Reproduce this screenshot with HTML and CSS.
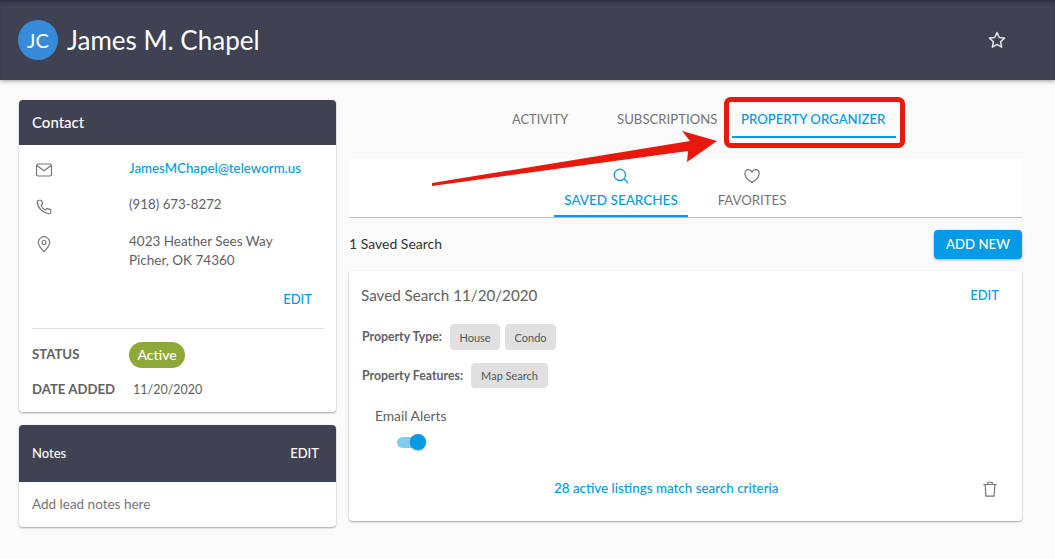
FILE: index.html
```html
<!DOCTYPE html>
<html lang="en">
<head>
<meta charset="utf-8">
<title>James M. Chapel</title>
<link rel="stylesheet" href="styles.css">
</head>
<body>
<header class="topbar">
  <div class="avatar">JC</div>
  <h1 class="name">James M. Chapel</h1>
  <svg class="star" viewBox="0 0 24 24" width="20" height="20"><path d="M12 3l2.7 6 6.3.7-4.7 4.4 1.3 6.5L12 17.3l-5.6 3.3 1.3-6.5L3 9.700l6.300-.7z" fill="none" stroke="#e4e5e8" stroke-width="1.800" stroke-linejoin="round"/></svg>
</header>
<main class="page">
  <aside class="side">
    <section class="card contact">
      <div class="card-head contact-head"><span>Contact</span></div>
      <div class="contact-body">
        <div class="row row-email">
          <svg class="ico" viewBox="0 0 24 24" width="18" height="18"><rect x="2" y="4" width="20" height="16" rx="2" fill="none" stroke="#757575" stroke-width="1.500"/><path d="M2.500 6l9.500 7 9.500-7" fill="none" stroke="#757575" stroke-width="1.500"/></svg>
          <a class="email">JamesMChapel@teleworm.us</a>
        </div>
        <div class="row row-phone">
          <svg class="ico" viewBox="0 0 24 24" width="18" height="18"><path d="M5 3h3.500l1.700 5-2.200 1.800c1 2.500 3.600 5.200 6.200 6.200l1.800-2.200 5 1.700V19c0 1.200-1 2.200-2.200 2C10.500 20.300 3.700 13.500 3 5.200 2.900 4 3.800 3 5 3z" fill="none" stroke="#757575" stroke-width="1.500" stroke-linejoin="round"/></svg>
          <span>(918) 673-8272</span>
        </div>
        <div class="row row-addr">
          <svg class="ico" viewBox="0 0 24 24" width="18" height="18"><path d="M12 22s-7.500-6.800-7.500-12.300a7.500 7.500 0 0 1 15 0C19.500 15.200 12 22 12 22z" fill="none" stroke="#757575" stroke-width="1.500"/><circle cx="12" cy="10" r="2.600" fill="none" stroke="#757575" stroke-width="1.500"/></svg>
          <span>4023 Heather Sees Way<br>Picher, OK 74360</span>
        </div>
        <div class="edit-line"><a class="link-edit">EDIT</a></div>
        <hr class="rule">
        <div class="meta meta-status"><b>STATUS</b><span class="badge">Active</span></div>
        <div class="meta meta-date"><b>DATE ADDED</b><span>11/20/2020</span></div>
      </div>
    </section>
    <section class="card notes">
      <div class="card-head notes-head"><span>Notes</span><span class="notes-edit">EDIT</span></div>
      <div class="notes-body">Add lead notes here</div>
    </section>
  </aside>
  <div class="content">
    <nav class="tabs">
      <a class="tab tab-activity">ACTIVITY</a>
      <a class="tab tab-subs">SUBSCRIPTIONS</a>
      <a class="tab tab-on">PROPERTY ORGANIZER</a>
    </nav>
    <div class="subtabs">
      <a class="subtab subtab-on">
        <svg viewBox="0 0 24 24" width="18" height="18"><circle cx="10.500" cy="10.500" r="7.500" fill="none" stroke="#039be5" stroke-width="1.700"/><path d="M16 16l5.500 5.500" stroke="#039be5" stroke-width="1.700" fill="none"/></svg>
        <span>SAVED SEARCHES</span>
      </a>
      <a class="subtab subtab-fav">
        <svg viewBox="0 0 24 24" width="20" height="18"><path d="M12 20.500S2.500 14.500 2.500 8.500C2.500 5.500 4.800 3.500 7.300 3.500c2 0 3.700 1 4.700 3 1-2 2.700-3 4.700-3 2.500 0 4.800 2 4.800 5 0 6-9.500 12-9.500 12z" fill="none" stroke="#757575" stroke-width="1.600"/></svg>
        <span>FAVORITES</span>
      </a>
    </div>
    <div class="toolbar">
      <span class="count">1 Saved Search</span>
      <button class="add">ADD NEW</button>
    </div>
    <section class="card search">
      <div class="search-head">
        <h2>Saved Search 11/20/2020</h2>
        <a class="link-edit">EDIT</a>
      </div>
      <div class="chips chips-type"><b>Property Type:</b><span class="chip">House</span><span class="chip">Condo</span></div>
      <div class="chips chips-feat"><b>Property Features:</b><span class="chip">Map Search</span></div>
      <div class="alerts">
        <span>Email Alerts</span>
        <span class="switch"><span class="knob"></span></span>
      </div>
      <div class="search-foot">
        <a class="match">28 active listings match search criteria</a>
        <svg class="trash" viewBox="0 0 24 24" width="18" height="18"><path d="M3 6h18M9 6V3h6v3M5.500 6l1 15.500h11L18.500 6" fill="none" stroke="#757575" stroke-width="1.600" stroke-linejoin="round"/></svg>
      </div>
    </section>
  </div>
</main>
<svg class="annot" viewBox="0 0 1055 559" width="1055" height="559">
  <rect x="726.500" y="99.500" width="176" height="46" rx="4" fill="none" stroke="#e8190c" stroke-width="5"/>
  <path d="M432 183L432 186L688 151L687 162L717 141L682 131L690 141z" fill="#e8190c"/>
</svg>
</body>
</html>
```
FILE: styles.css
```css
* { box-sizing: border-box; }
html, body { margin: 0; padding: 0; }
body {
  width: 1055px;
  height: 559px;
  overflow: hidden;
  position: relative;
  background: #fafafa;
  font-family: "Lato", "Open Sans", sans-serif;
  font-size: 13.300px;
  color: #5f5f5f;
}
a { color: inherit; text-decoration: none; }
.topbar {
  height: 80px;
  background: #3e4253;
  display: flex;
  align-items: center;
  padding: 0 48px 0 18px;
  box-shadow: inset 0 4px 4px -3px rgba(0,0,0,.45), 0 1px 4px rgba(0,0,0,.4);
  position: relative;
}
.avatar {
  width: 40px;
  height: 40px;
  border-radius: 50%;
  background: #378bd8;
  color: #fff;
  font-size: 20px;
  font-weight: 400;
  display: flex;
  align-items: center;
  justify-content: center;
}
.name {
  margin: 0 0 0 9px;
  font-size: 26px;
  font-weight: 400;
  color: #fff;
  flex: 1;
}
.page {
  display: flex;
  gap: 13px;
  padding: 20px 33px 0 19px;
}
.side { width: 317px; display: flex; flex-direction: column; gap: 13px; }
.content { width: 673px; }
.card {
  background: #fff;
  border-radius: 4px;
  box-shadow: 0 1px 2px rgba(0,0,0,.35);
}
.card-head {
  background: #3e4253;
  color: #fff;
  border-radius: 4px 4px 0 0;
  display: flex;
  align-items: center;
  justify-content: space-between;
  padding: 0 17px 0 13px;
}
.contact { height: 312px; }
.contact-head { height: 45px; font-size: 15px; font-weight: 500; padding-bottom: 2px; }
.contact-body { padding: 13px 12px 0 13px; }
.row { display: flex; align-items: flex-start; line-height: 21px; }
.ico { width: 18px; flex: none; margin: 3px 76px 0 3px; }
.row-email { height: 36px; }
.row-phone { height: 37px; }
.row-phone .ico { margin-top: 4px; }
.row-addr { height: 57px; line-height: 19px; margin-top: 1px; font-size: 13.500px; }
.email { color: #039be5; font-weight: 500; }
.edit-line { text-align: right; padding-right: 12px; line-height: 20px; }
.link-edit { color: #039be5; font-size: 13px; font-weight: 500; }
.rule { border: 0; border-top: 1px solid #e0e0e0; margin: 19px 0 0; }
.meta { display: flex; align-items: center; }
.meta b { font-weight: 700; color: #616161; font-size: 13.200px; }
.meta-status { margin-top: 13px; }
.meta-status b { width: 97px; padding-bottom: 2px; }
.badge {
  background: #8fa83a;
  color: #fff;
  height: 26px;
  width: 56px;
  border-radius: 13px;
  display: flex;
  align-items: center;
  justify-content: center;
  font-size: 14px;
  font-weight: 500;
  padding-bottom: 2px;
}
.meta-date { margin-top: 13px; font-size: 12.500px; }
.meta-date b { width: 101px; }
.notes { height: 102px; }
.notes-head { height: 57px; font-size: 13px; font-weight: 500; padding-bottom: 1px; }
.notes-body { padding: 14px 13px 0; color: #757575; font-size: 13.500px; }
.tabs { display: flex; height: 39px; padding-left: 163px; }
.tab { color: #757575; font-size: 13.200px; line-height: 20px; padding-top: 9px; }
.tab-activity { width: 105px; font-size: 12.900px; }
.tab-subs { width: 115px; }
.tab-on {
  color: #039be5;
  font-weight: 500;
  width: 164px;
  height: 38px;
  border-bottom: 2px solid #039be5;
  padding-left: 9px;
}
.subtabs {
  margin-top: 20px;
  height: 59px;
  background: #fff;
  border-bottom: 1px solid #bdbdbd;
  display: flex;
  padding-left: 205px;
}
.subtab {
  width: 134px;
  height: 58px;
  display: flex;
  flex-direction: column;
  align-items: center;
  padding-top: 8px;
  gap: 7px;
  color: #757575;
  font-size: 13.200px;
}
.subtab-on {
  color: #039be5;
  font-weight: 500;
  font-size: 13.500px;
  border-bottom: 2px solid #039be5;
}
.subtab-fav { width: 128px; }
.toolbar {
  display: flex;
  justify-content: space-between;
  align-items: center;
  height: 29px;
  margin-top: 12px;
}
.count { color: #333; font-size: 14px; padding-bottom: 2px; }
.add {
  background: #039be5;
  color: #fff;
  border: 0;
  border-radius: 4px;
  width: 88px;
  height: 29px;
  padding: 0 0 2px;
  font: 500 13.200px "Lato", sans-serif;
  box-shadow: 0 1px 3px rgba(0,0,0,.3);
}
.search {
  margin-top: 12px;
  height: 250px;
  padding: 0 23px 0 12px;
}
.search-head {
  display: flex;
  justify-content: space-between;
  align-items: center;
  height: 48px;
}
.search-head h2 { margin: 0; font-size: 15.200px; font-weight: 400; color: #616161; }
.chips { display: flex; align-items: center; padding-left: 1px; font-size: 12.300px; }
.chips b { color: #616161; font-weight: 700; }
.chip {
  background: #e0e0e0;
  border-radius: 4px;
  height: 26px;
  width: 50px;
  display: flex;
  align-items: center;
  justify-content: center;
  margin-left: 5px;
  font-size: 11px;
  color: #555;
}
.chips-type { margin-top: 5px; }
.chips-type b { margin-right: 3px; padding-bottom: 2px; }
.chips-type .chip:last-child { width: 51px; }
.chips-feat { margin-top: 13px; }
.chips-feat b { margin-right: 3px; }
.chips-feat .chip { height: 25px; width: 77px; }
.alerts {
  margin: 19px 0 0 14px;
  display: flex;
  flex-direction: column;
  align-items: flex-start;
  gap: 10px;
  font-size: 13.800px;
}
.switch {
  margin-left: 22px;
  width: 29px;
  height: 11px;
  border-radius: 6px;
  background: #81cdf2;
  position: relative;
  margin-top: 3px;
}
.knob {
  position: absolute;
  right: 0;
  top: -3px;
  width: 16px;
  height: 16px;
  border-radius: 50%;
  background: #039be5;
  box-shadow: 0 1px 2px rgba(0,0,0,.3);
}
.search-foot {
  display: flex;
  justify-content: space-between;
  align-items: center;
  margin-top: 32px;
  padding-left: 193px;
}
.match { color: #039be5; font-weight: 500; font-size: 13.400px; padding-bottom: 2px; }
.annot { position: absolute; left: 0; top: 0; pointer-events: none; }
```
